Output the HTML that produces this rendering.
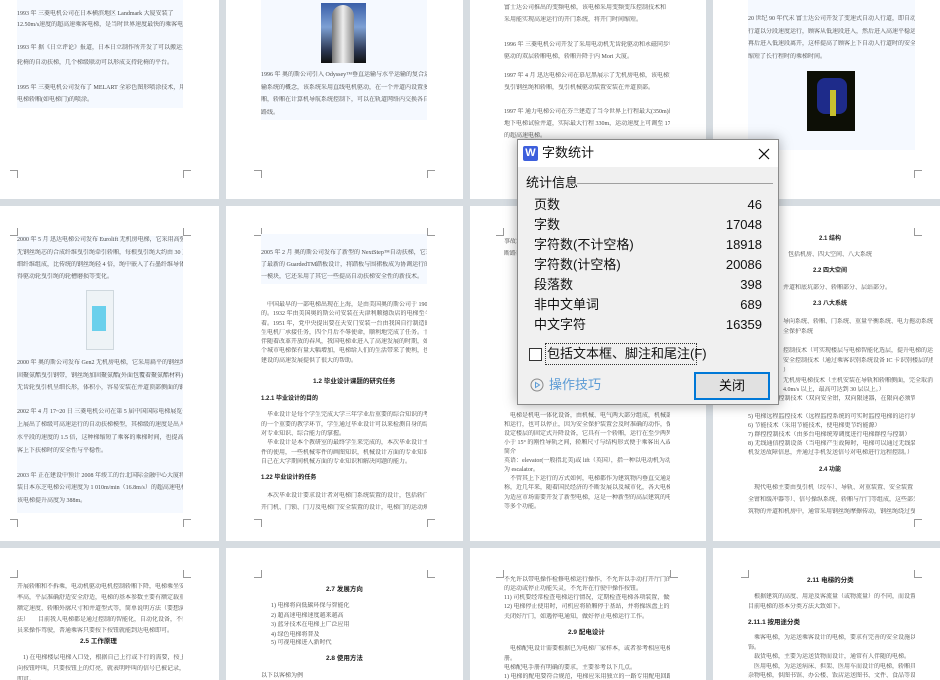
<!DOCTYPE html>
<html><head><meta charset="utf-8">
<style>
*{margin:0;padding:0;box-sizing:border-box}
body{width:940px;height:680px;overflow:hidden;background:#d6dce1;position:relative;font-family:"Liberation Sans","Noto Sans CJK SC",sans-serif}
.pg{position:absolute;background:#fff;overflow:hidden}
.bg{position:absolute;background:#f5f9ff}
i{position:absolute;font-style:normal;font-size:6px;line-height:8px;color:#4a4a4a;white-space:nowrap;overflow:hidden;font-family:"Liberation Serif","Noto Serif CJK SC",serif}
b{position:absolute;font-size:6.5px;line-height:8px;color:#222;white-space:nowrap;font-weight:bold;font-family:"Liberation Sans","Noto Sans CJK SC",sans-serif}
.cm{position:absolute;width:8px;height:8px}
.tl{border-right:1px solid #999;border-bottom:1px solid #999}
.tr{border-left:1px solid #999;border-bottom:1px solid #999}
.bl{border-right:1px solid #999;border-top:1px solid #999}
.br{border-left:1px solid #999;border-top:1px solid #999}
.dlg{position:absolute;left:517px;top:139px;width:262px;height:266px;background:#f0f0f0;border:1px solid #8a8a8a;box-shadow:0 0 12px rgba(0,0,0,.35);font-family:"Liberation Sans","Noto Sans CJK SC",sans-serif;color:#111}
.dlg span{position:absolute;font-size:13px;line-height:16px;white-space:nowrap}
</style></head><body>

<!-- Row 1 -->
<div class="pg" style="left:0;top:0;width:219px;height:199px">
<div class="bg" style="left:17px;top:0;width:166px;height:108px"></div>
<i style="left:17px;top:10px;width:166px">1993 年 三菱电机公司在日本横滨地区 Landmark 大厦安装了</i>
<i style="left:17px;top:21px;width:166px">12.50m/s速度的超高速乘客电梯，是当时世界速度最快的乘客电梯。</i>
<i style="left:17px;top:44px;width:166px">1993 年 据《日立评论》报道，日本日立制作所开发了可以搬运大型</i>
<i style="left:17px;top:59px;width:166px">轮椅的自动扶梯，几个梯级联动可以形成支持轮椅的平台。</i>
<i style="left:17px;top:84px;width:166px">1995 年 三菱电机公司发布了 MELART 全彩色图形喷涂技术，用于</i>
<i style="left:17px;top:96px;width:166px">电梯轿厢(如电梯门)的喷涂。</i>
<div class="cm bl" style="left:10px;top:170px"></div><div class="cm br" style="left:183px;top:170px"></div>
</div>
<div class="pg" style="left:226px;top:0;width:237px;height:199px">
<div class="bg" style="left:35px;top:0;width:166px;height:120px"></div>
<div style="position:absolute;left:95px;top:3px;width:45px;height:60px;background:linear-gradient(180deg,#3a5fa8,#7da0d4 40%,#2a3550 80%,#111)"></div>
<div style="position:absolute;left:106px;top:5px;width:22px;height:58px;border-radius:11px 11px 0 0;background:linear-gradient(90deg,#777,#eee,#888)"></div>
<i style="left:35px;top:71px;width:166px">1996 年 奥的斯公司引入 Odyssey™垂直运输与水平运输的复合运</i>
<i style="left:35px;top:84px;width:166px">输系统的概念，该系统采用直线电机驱动，在一个井道内设置多台轿</i>
<i style="left:35px;top:96px;width:166px">厢，轿厢在计算机导航系统控制下，可以在轨道网络内交换各自运行</i>
<i style="left:35px;top:109px;width:166px">路线。</i>
<div class="cm bl" style="left:28px;top:170px"></div><div class="cm br" style="left:201px;top:170px"></div>
</div>
<div class="pg" style="left:470px;top:0;width:236px;height:199px">
<i style="left:34px;top:4px;width:166px">富士达公司推出的变频电梯，该电梯采用变频变压控制技术和</i>
<i style="left:34px;top:16px;width:166px">采用能实现高速运行的开门系统，将开门时间缩短。</i>
<i style="left:34px;top:41px;width:166px">1996 年 三菱电机公司开发了采用电动机无齿轮驱动和永磁同步电机</i>
<i style="left:34px;top:53px;width:166px">驱动的双层轿厢电梯，轿厢升降于内 Mori 大厦。</i>
<i style="left:34px;top:72px;width:166px">1997 年 4 月 迅达电梯公司在慕尼黑展示了无机房电梯，该电梯无需</i>
<i style="left:34px;top:84px;width:166px">曳引钢丝绳和轿厢，曳引机械驱动装置安装在井道顶部。</i>
<i style="left:34px;top:108px;width:166px">1997 年 通力电梯公司在芬兰建造了当今世界上行程最大(350m)的</i>
<i style="left:34px;top:120px;width:166px">地下电梯试验井道，实际最大行程 330m，运动速度上可调至 17.00m/s</i>
<i style="left:34px;top:132px;width:166px">的超高速电梯。</i>
</div>
<div class="pg" style="left:713px;top:0;width:227px;height:199px">
<div class="bg" style="left:35px;top:0;width:167px;height:150px"></div>
<i style="left:35px;top:15px;width:167px">20 世纪 90 年代末 富士达公司开发了变速式自动人行道，即自动人</i>
<i style="left:35px;top:28px;width:167px">行道以分段速度运行，顾客从低速段进入，然后进入高速平稳运行段，</i>
<i style="left:35px;top:40px;width:167px">再后进入低速段离开，这样提高了顾客上下自动人行道时的安全性，</i>
<i style="left:35px;top:53px;width:167px">缩短了长行程时的乘梯时间。</i>
<div style="position:absolute;left:94px;top:71px;width:48px;height:60px;background:#0d0f06"></div>
<div style="position:absolute;left:104px;top:78px;width:30px;height:36px;background:#1e2b8a;border-radius:8px"></div>
<div style="position:absolute;left:117px;top:90px;width:6px;height:26px;background:#c8c030"></div>
<div class="cm br" style="left:201px;top:170px"></div>
</div>

<!-- Row 2 -->
<div class="pg" style="left:0;top:206px;width:219px;height:335px">
<div class="cm tl" style="left:10px;top:22px"></div><div class="cm tr" style="left:183px;top:22px"></div>
<div class="bg" style="left:17px;top:30px;width:166px;height:277px"></div>
<i style="left:17px;top:30px;width:166px">2000 年 5 月 迅达电梯公司发布 Eurolift 无机房电梯，它采用高强度</i>
<i style="left:17px;top:43px;width:166px">无钢丝绳芯的合成纤维曳引绳牵引轿厢，每根曳引绳大约由 30 万股</i>
<i style="left:17px;top:55px;width:166px">细纤维组成，比传统的钢丝绳轻 4 倍，绳中嵌入了石墨纤维导体，使</i>
<i style="left:17px;top:67px;width:166px">得驱动轮曳引绳的轮槽磨损等变化。</i>
<div style="position:absolute;left:86px;top:84px;width:28px;height:60px;background:#eef3f6;border:1px solid #cfd8de"></div>
<div style="position:absolute;left:92px;top:100px;width:14px;height:25px;background:#6ad0ec"></div>
<i style="left:17px;top:153px;width:166px">2000 年 奥的斯公司发布 Gen2 无机房电梯，它采用扁平的钢丝绳加</i>
<i style="left:17px;top:166px;width:166px">固聚氨酯曳引钢带，钢丝绳加固聚氨酯(外面包覆着聚氨酯材料)柔性好，</i>
<i style="left:17px;top:178px;width:166px">无齿轮曳引机呈细长形，体积小，容易安装在井道顶部侧面的钢梁上。</i>
<i style="left:17px;top:202px;width:166px">2002 年 4 月 17~20 日 三菱电机公司在第 5 届中国国际电梯展览会</i>
<i style="left:17px;top:215px;width:166px">上展出了梯级可高速运行的自动扶梯模型，其梯级的速度是出入口</i>
<i style="left:17px;top:228px;width:166px">水平段的速度的 1.5 倍，这种梯缩短了乘客的乘梯时间，也提高了乘</i>
<i style="left:17px;top:241px;width:166px">客上下扶梯时的安全性与平稳性。</i>
<i style="left:17px;top:266px;width:166px">2003 年 正在建设中预计 2008 年竣工的台北国际金融中心大厦将安</i>
<i style="left:17px;top:278px;width:166px">装日本东芝电梯公司速度为 1 010m/min（16.8m/s）的超高速电梯，</i>
<i style="left:17px;top:291px;width:166px">该电梯提升高度为 388m。</i>
<div class="cm bl" style="left:10px;top:313px"></div><div class="cm br" style="left:183px;top:313px"></div>
</div>
<div class="pg" style="left:226px;top:206px;width:237px;height:335px">
<div class="cm tl" style="left:28px;top:22px"></div><div class="cm tr" style="left:201px;top:22px"></div>
<div class="bg" style="left:35px;top:28px;width:166px;height:50px"></div>
<i style="left:35px;top:43px;width:166px">2005 年 2 月 奥的斯公司发布了新型的 NextStep™自动扶梯，它采用</i>
<i style="left:35px;top:55px;width:166px">了最新的 GuardedTM踏板设计，将踏板与围裙板成为协调运行的单</i>
<i style="left:35px;top:67px;width:166px">一模块，它还采用了其它一些提高自动扶梯安全性的新技术。</i>
<i style="left:35px;top:95px;width:166px">　中国最早的一部电梯出现在上海，是由美国奥的斯公司于 1901 年安装</i>
<i style="left:35px;top:104px;width:166px">的。1932 年由美国奥的斯公司安装在天津利顺德饭店的电梯至今仍在安全运转</i>
<i style="left:35px;top:114px;width:166px">着。1951 年，党中央提出要在天安门安装一台由我国自行制造的电梯，天津从庆</i>
<i style="left:35px;top:123px;width:166px">生电机厂承接任务，四个月后不辱使命，顺利地完成了任务。十一届三中全会后，</i>
<i style="left:35px;top:132px;width:166px">伴随着改革开放的春风，我国电梯业进入了高速发展的时期，如今，在我国每年一</i>
<i style="left:35px;top:141px;width:166px">个城市电梯保有量大幅增加，电梯给人们的生活带来了便利，也为我国现代化</i>
<i style="left:35px;top:151px;width:166px">建设的高速发展提供了很大的帮助。</i>
<b style="left:87px;top:172px">1.2 毕业设计课题的研究任务</b>
<b style="left:35px;top:189px;font-size:6px">1.2.1 毕业设计的目的</b>
<i style="left:35px;top:205px;width:166px">　毕业设计是每个学生完成大学三年学业后重要的综合知识的考核，也是学校教育</i>
<i style="left:35px;top:215px;width:166px">的一个重要的教学环节，学生通过毕业设计可以来检测自身的综合能力以及</i>
<i style="left:35px;top:224px;width:166px">对专业知识、综合能力的掌握。</i>
<i style="left:35px;top:233px;width:166px">　毕业设计是本个教研室的最终学生来完成的，本次毕业设计主要利用 CAD 画图软</i>
<i style="left:35px;top:243px;width:166px">件的使用，一些机械零件的画图知识，机械设计方面的专业知识，也是培养学生</i>
<i style="left:35px;top:252px;width:166px">自己在大学期间机械方面的专业知识和解决问题的能力。</i>
<b style="left:35px;top:268px;font-size:6px">1.22 毕业设计的任务</b>
<i style="left:35px;top:286px;width:166px">　本次毕业设计要求设计者对电梯门系统装置的设计，包括轿门、层门、自动</i>
<i style="left:35px;top:298px;width:166px">开门机、门锁、门刀及电梯门安全装置的设计，电梯门的运动规律和控制系统</i>
<div class="cm bl" style="left:28px;top:313px"></div><div class="cm br" style="left:201px;top:313px"></div>
</div>
<div class="pg" style="left:470px;top:206px;width:236px;height:335px">
<div class="cm tl" style="left:26px;top:22px"></div><div class="cm tr" style="left:200px;top:22px"></div>
<i style="left:34px;top:32px;width:40px">事故发生</i>
<i style="left:34px;top:44px;width:40px">断路器</i>
<i style="left:34px;top:206px;width:166px">　电梯是机电一体化设备，由机械、电气两大部分组成，机械部分主要</i>
<i style="left:34px;top:215px;width:166px">和运行，也可以停止，因为安全保护装置会及时准确的动作，保证人员的安全。</i>
<i style="left:34px;top:224px;width:166px">设定楼层的固定式升降设备，它具有一个轿厢，运行在至少两列垂直的或倾斜角</i>
<i style="left:34px;top:233px;width:166px">小于 15° 的刚性导轨之间，轿厢尺寸与结构形式便于乘客出入或装卸货物。</i>
<i style="left:34px;top:242px;width:166px">简介</i>
<i style="left:34px;top:251px;width:166px">英语：elevator(一般指北美)或 lift（英国），指一种以电动机为动力的垂直升降机</i>
<i style="left:34px;top:260px;width:166px">为 escalator。</i>
<i style="left:34px;top:269px;width:166px">　不管其上下运行的方式如何，电梯都作为建筑物内垂直交通运输工具的总称</i>
<i style="left:34px;top:278px;width:166px">称，近几年来，随着国民经济的不断发展以及城市化，各大电梯公司现在都发展电梯</i>
<i style="left:34px;top:288px;width:166px">为适应市场需要开发了新型电梯，这是一种新型的高层建筑的电梯，具有多种功能</i>
<i style="left:34px;top:297px;width:166px">等多个功能。</i>
</div>
<div class="pg" style="left:713px;top:206px;width:227px;height:335px">
<div class="cm tr" style="left:201px;top:22px"></div>
<b style="left:106px;top:29px;font-size:6px">2.1 结构</b>
<i style="left:75px;top:45px;width:140px">包括机房、四大空间、八大系统</i>
<b style="left:100px;top:61px;font-size:6px">2.2 四大空间</b>
<i style="left:70px;top:78px;width:140px">并道和底坑部分、轿厢部分、层站部分。</i>
<b style="left:100px;top:94px;font-size:6px">2.3 八大系统</b>
<i style="left:70px;top:112px;width:150px">导向系统、轿厢、门系统、重量平衡系统、电力拖动系统、电气</i>
<i style="left:70px;top:122px;width:150px">全保护系统</i>
<i style="left:70px;top:141px;width:150px">控制技术（可实现楼层与电梯智能化选层，提升电梯的运输效率）</i>
<i style="left:70px;top:151px;width:150px">安全控制技术（通过乘客识别系统设备 IC 卡识别楼层的控制设备</i>
<i style="left:70px;top:161px;width:150px">）</i>
<i style="left:70px;top:171px;width:150px">无机房电梯技术（主机安装在导轨和轿厢侧面，完全取消井道机房</i>
<i style="left:70px;top:180px;width:150px">4.0m/s 以上，最高可达到 30 层以上。）</i>
<i style="left:35px;top:189px;width:167px">4) 电梯制动控制技术（双向安全钳，双向限速器，在限向必须管理。中国首推</i>
<i style="left:35px;top:207px;width:167px">5) 电梯远程监控技术（远程监控系统的可实时监控电梯的运行状况）</i>
<i style="left:35px;top:216px;width:167px">6) 节能技术（采用节能技术，使电梯更节约能源）</i>
<i style="left:35px;top:225px;width:167px">7) 群控控制技术（由多台电梯统筹调度进行电梯群控与控制）</i>
<i style="left:35px;top:234px;width:167px">8) 无线通信控制设备（当电梯产生故障时，电梯可以通过无线装置将手</i>
<i style="left:35px;top:243px;width:167px">机发送故障信息，并通过手机发送信号对电梯进行远程控制。）</i>
<b style="left:106px;top:260px;font-size:6px">2.4 功能</b>
<i style="left:35px;top:278px;width:167px">　现代电梯主要由曳引机（绞车）、导轨、对重装置、安全装置（如限速器、安</i>
<i style="left:35px;top:290px;width:167px">全钳和缓冲器等）、信号操纵系统、轿厢与厅门等组成，这些部分分别安装在建</i>
<i style="left:35px;top:302px;width:167px">筑物的井道和机房中，通常采用钢丝绳摩擦传动，钢丝绳绕过曳引轮，两端分别</i>
<div class="cm br" style="left:201px;top:313px"></div>
</div>

<!-- Row 3 -->
<div class="pg" style="left:0;top:548px;width:219px;height:132px">
<div class="cm tl" style="left:10px;top:22px"></div><div class="cm tr" style="left:183px;top:22px"></div>
<i style="left:17px;top:35px;width:166px">开展轿厢和不拆乘，电动机驱动电机控制轿厢下降，电梯乘坐安全可靠，输送效</i>
<i style="left:17px;top:46px;width:166px">率高，平层准确舒适安全舒适，电梯的基本参数主要有额定载重量、可乘人数、</i>
<i style="left:17px;top:57px;width:166px">额定速度、轿厢外廓尺寸和井道型式等，简单说明方法（要想满足下面有解决方</i>
<i style="left:17px;top:68px;width:166px">法）　　目前我人电梯都是通过控制的智能化，自动化设备，不需要专门的人</i>
<i style="left:17px;top:79px;width:166px">员来操作驾驶，普通乘客只要按下按钮就能到达电梯即可。</i>
<b style="left:80px;top:90px">2.5 工作原理</b>
<i style="left:17px;top:106px;width:166px">　1) 在电梯楼层电梯入口处，根据自己上行或下行的需要，按上方向或下方</i>
<i style="left:17px;top:117px;width:166px">向按钮呼叫，只要按钮上的灯亮，就表明呼叫的信号已被记录，只要等待电梯到来</i>
<i style="left:17px;top:128px;width:166px">即可。</i>
</div>
<div class="pg" style="left:226px;top:548px;width:237px;height:132px">
<div class="cm tl" style="left:28px;top:22px"></div><div class="cm tr" style="left:201px;top:22px"></div>
<b style="left:100px;top:38px">2.7 发展方向</b>
<i style="left:45px;top:54px;width:150px">1) 电梯将向低碳环保与智能化</i>
<i style="left:45px;top:64px;width:150px">2) 超高速电梯速度越来越高</i>
<i style="left:45px;top:73px;width:150px">3) 蓝牙技术在电梯上广泛应用</i>
<i style="left:45px;top:83px;width:150px">4) 绿色电梯将普及</i>
<i style="left:45px;top:91px;width:150px">5) 可视电梯进入新时代</i>
<b style="left:100px;top:107px">2.8 使用方法</b>
<i style="left:35px;top:124px;width:166px">以下以客梯为例</i>
</div>
<div class="pg" style="left:470px;top:548px;width:236px;height:132px">
<div class="cm tl" style="left:26px;top:22px"></div><div class="cm tr" style="left:200px;top:22px"></div>
<i style="left:34px;top:28px;width:166px">不允许以带电操作检修电梯运行操作，不允许以手动打开厅门的锁，因为电梯</i>
<i style="left:34px;top:37px;width:166px">的运动或停止功能失灵，不允许在行驶中操作按钮。</i>
<i style="left:34px;top:46px;width:166px">11) 司机要经常检查电梯运行情况，定期检查电梯各项装置，做好检查记录。</i>
<i style="left:34px;top:55px;width:166px">12) 电梯停止使用时，司机应将轿厢停于基站，并将操纵盘上的开关全部断开，</i>
<i style="left:34px;top:65px;width:166px">关闭好厅门，如遇停电通知，做好停止电梯运行工作。</i>
<b style="left:98px;top:81px">2.9 配电设计</b>
<i style="left:34px;top:97px;width:166px">　电梯配电设计需要根据已为电梯厂家样本，或者参考相应电梯配电设计手</i>
<i style="left:34px;top:107px;width:166px">册。</i>
<i style="left:34px;top:116px;width:166px">电梯配电手册有明确的要求，主要参考以下几点。</i>
<i style="left:34px;top:125px;width:166px">1) 电梯的配电要符合规范，电梯应采用独立的一路专用配电回路。</i>
</div>
<div class="pg" style="left:713px;top:548px;width:227px;height:132px">
<div class="cm tl" style="left:28px;top:22px"></div><div class="cm tr" style="left:201px;top:22px"></div>
<b style="left:94px;top:29px">2.11 电梯的分类</b>
<i style="left:35px;top:45px;width:167px">　根据建筑的高度、用途及客流量（或物流量）的不同，而设置不同类型的电梯，</i>
<i style="left:35px;top:55px;width:167px">目前电梯的基本分类方法大致如下。</i>
<b style="left:35px;top:71px">2.11.1 按用途分类</b>
<i style="left:35px;top:86px;width:167px">　乘客电梯，为运送乘客设计的电梯，要求有完善的安全设施以及一定的轿内装</i>
<i style="left:35px;top:96px;width:167px">饰。</i>
<i style="left:35px;top:105px;width:167px">　载货电梯，主要为运送货物而设计，通常有人伴随的电梯。</i>
<i style="left:35px;top:115px;width:167px">　医用电梯，为运送病床、担架、医用车而设计的电梯，轿厢具有长而窄的特点。</i>
<i style="left:35px;top:124px;width:167px">杂物电梯，供图书馆、办公楼、饭店运送图书、文件、食品等设计的电梯。</i>
</div>

<!-- Dialog -->
<div class="dlg">
<div style="position:absolute;left:0;top:0;width:260px;height:27px;background:#fff"></div>
<div style="position:absolute;left:5px;top:6px;width:15px;height:15px;background:#3d5fdc;border-radius:2px;color:#fff;font:bold 11px/15px 'Liberation Sans',sans-serif;text-align:center">W</div>
<span style="left:24px;top:5px">字数统计</span>
<svg style="position:absolute;left:240px;top:8px" width="12" height="12" viewBox="0 0 12 12"><path d="M1 1L11 11M11 1L1 11" stroke="#111" stroke-width="1.2"/></svg>
<span style="left:8px;top:35px">统计信息</span>
<div style="position:absolute;left:59px;top:43px;width:196px;height:1px;background:#a0a0a0"></div>
<span style="left:16px;top:57px">页数</span><span style="right:16px;top:57px">46</span>
<span style="left:16px;top:77px">字数</span><span style="right:16px;top:77px">17048</span>
<span style="left:16px;top:97px">字符数(不计空格)</span><span style="right:16px;top:97px">18918</span>
<span style="left:16px;top:117px">字符数(计空格)</span><span style="right:16px;top:117px">20086</span>
<span style="left:16px;top:137px">段落数</span><span style="right:16px;top:137px">398</span>
<span style="left:16px;top:157px">非中文单词</span><span style="right:16px;top:157px">689</span>
<span style="left:16px;top:177px">中文字符</span><span style="right:16px;top:177px">16359</span>
<div style="position:absolute;left:11px;top:208px;width:13px;height:13px;border:1px solid #333;background:#fff"></div>
<div style="position:absolute;left:27px;top:203px;width:152px;height:22px;border:1px dotted #333"></div>
<span style="left:29px;top:206px">包括文本框、脚注和尾注(F)</span>
<svg style="position:absolute;left:12px;top:238px" width="14" height="14" viewBox="0 0 14 14"><circle cx="7" cy="7" r="6" fill="none" stroke="#888" stroke-width="1"/><path d="M5.5 4.5L9.5 7L5.5 9.5Z" fill="none" stroke="#5b9bd5" stroke-width="1"/></svg>
<span style="left:31px;top:237px;color:#5b9bd5">操作技巧</span>
<div style="position:absolute;left:176px;top:232px;width:76px;height:28px;background:#e1e1e1;border:2px solid #0078d7"></div>
<span style="left:201px;top:238px">关闭</span>
</div>
</body></html>
